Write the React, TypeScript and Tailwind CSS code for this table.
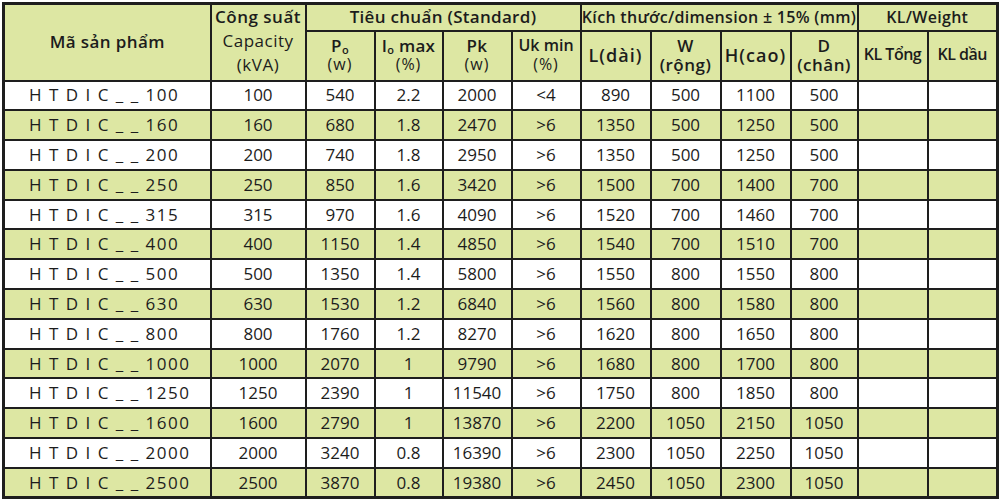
const rows: string[][] = [
  ["100", "540", "2.2", "2000", "<4", "890", "500", "1100", "500"],
  ["160", "680", "1.8", "2470", ">6", "1350", "500", "1250", "500"],
  ["200", "740", "1.8", "2950", ">6", "1350", "500", "1250", "500"],
  ["250", "850", "1.6", "3420", ">6", "1500", "700", "1400", "700"],
  ["315", "970", "1.6", "4090", ">6", "1520", "700", "1460", "700"],
  ["400", "1150", "1.4", "4850", ">6", "1540", "700", "1510", "700"],
  ["500", "1350", "1.4", "5800", ">6", "1550", "800", "1550", "800"],
  ["630", "1530", "1.2", "6840", ">6", "1560", "800", "1580", "800"],
  ["800", "1760", "1.2", "8270", ">6", "1620", "800", "1650", "800"],
  ["1000", "2070", "1", "9790", ">6", "1680", "800", "1700", "800"],
  ["1250", "2390", "1", "11540", ">6", "1750", "800", "1850", "800"],
  ["1600", "2790", "1", "13870", ">6", "2200", "1050", "2150", "1050"],
  ["2000", "3240", "0.8", "16390", ">6", "2300", "1050", "2250", "1050"],
  ["2500", "3870", "0.8", "19380", ">6", "2450", "1050", "2300", "1050"],
];

const widths = [207, 95, 69, 68, 69, 69, 70, 70, 70, 67, 70, 70];

export default function App() {
  return (
    <div className="h-[500px] w-[1000px] overflow-hidden bg-white pl-[2px] pt-[2px] font-['Open_Sans','Noto_Sans',sans-serif] text-[#1c1c1c]">
      <table className="table-fixed border-collapse border-[3px] border-[#1e1e1e] text-center">
        <colgroup>
          {widths.map((w, i) => (
            <col key={i} style={{ width: w }} />
          ))}
        </colgroup>
        <thead className="bg-[#dde7a3] tracking-[0.3px]">
          <tr className="h-[27px] leading-[22px]">
            <th rowSpan={2} className="border-2 border-[#1e1e1e] text-[17px] font-semibold tracking-[0.4px]">
              Mã sản phẩm
            </th>
            <th rowSpan={2} className="border-2 border-[#1e1e1e] p-0 align-top text-[17px] leading-[24px] tracking-[0.5px]">
              <div className="font-semibold">Công suất</div>
              <div className="font-normal">Capacity</div>
              <div className="font-normal">(kVA)</div>
            </th>
            <th colSpan={4} className="border-2 border-[#1e1e1e] p-0 text-[17px] font-semibold">
              Tiêu chuẩn (Standard)
            </th>
            <th colSpan={4} className="border-2 border-[#1e1e1e] p-0 text-[16px] font-semibold">
              Kích thước/dimension ± 15% (mm)
            </th>
            <th colSpan={2} className="border-2 border-[#1e1e1e] p-0 text-[16px] font-semibold">
              KL/Weight
            </th>
          </tr>
          <tr className="h-[50px] leading-[19px]">
            <Sub top={<>P<sub className="text-[11px]">o</sub></>} bottom="(w)" />
            <Sub top={<>I<sub className="text-[11px]">o</sub> max</>} bottom="(%)" />
            <Sub top="Pk" bottom="(w)" />
            <Sub top="Uk min" bottom="(%)" tight />
            <th className="border-2 border-[#1e1e1e] text-[18px] font-semibold tracking-[1px]">L(dài)</th>
            <Sub top="W" bottom="(rộng)" bold />
            <th className="border-2 border-[#1e1e1e] text-[18px] font-semibold tracking-[1px]">H(cao)</th>
            <Sub top="D" bottom="(chân)" bold />
            <th className="border-2 border-[#1e1e1e] pb-[2px] text-[16px] font-semibold tracking-[-0.5px]">KL Tổng</th>
            <th className="border-2 border-[#1e1e1e] pb-[2px] text-[16px] font-semibold tracking-[-0.5px]">KL dầu</th>
          </tr>
        </thead>
        <tbody className="text-[17px] leading-[24px]">
          {rows.map((r, i) => (
            <tr key={r[0]} className={i % 2 === 0 ? "h-[29.8px] bg-white" : "h-[29.8px] bg-[#dde7a3]"}>
              <td className="border-2 border-[#1e1e1e] pl-[24px] text-left tracking-[1.5px] whitespace-pre">
                {"H T D I C _ _ " + r[0]}
              </td>
              {r.map((v, j) => (
                <td key={j} className="border-2 border-[#1e1e1e]">
                  {v}
                </td>
              ))}
              <td className="border-2 border-[#1e1e1e]" />
              <td className="border-2 border-[#1e1e1e]" />
            </tr>
          ))}
        </tbody>
      </table>
    </div>
  );
}

function Sub({
  top,
  bottom,
  bold,
  tight,
}: {
  top: React.ReactNode;
  bottom: string;
  bold?: boolean;
  tight?: boolean;
}) {
  return (
    <th className="border-2 border-[#1e1e1e] pb-[2px]">
      <div className={tight ? "text-[16px] font-semibold tracking-[0px]" : "text-[17px] font-semibold"}>{top}</div>
      <div className={bold ? "text-[17px] font-semibold tracking-[0.5px]" : "text-[16px] font-normal tracking-[1px]"}>
        {bottom}
      </div>
    </th>
  );
}
